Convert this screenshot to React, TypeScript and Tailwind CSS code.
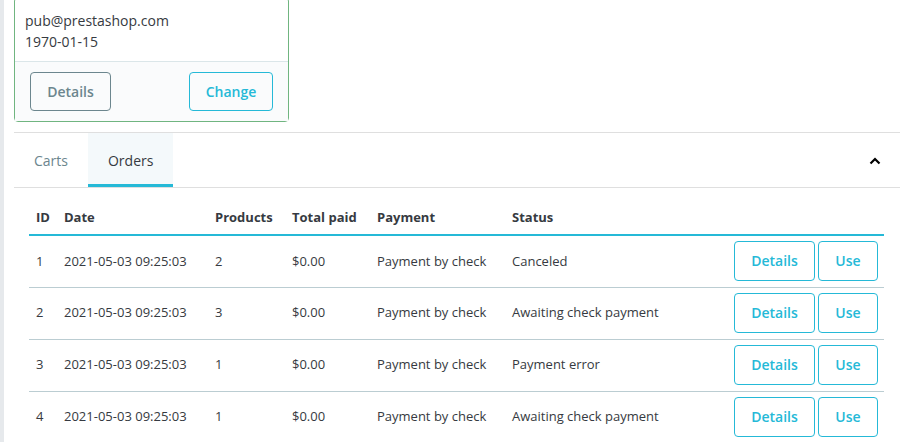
import { useState } from "react";

const orders = [
  { id: 1, date: "2021-05-03 09:25:03", products: 2, total: "$0.00", payment: "Payment by check", status: "Canceled" },
  { id: 2, date: "2021-05-03 09:25:03", products: 3, total: "$0.00", payment: "Payment by check", status: "Awaiting check payment" },
  { id: 3, date: "2021-05-03 09:25:03", products: 1, total: "$0.00", payment: "Payment by check", status: "Payment error" },
  { id: 4, date: "2021-05-03 09:25:03", products: 1, total: "$0.00", payment: "Payment by check", status: "Awaiting check payment" },
];

const outlineCyan =
  "h-[40px] rounded-[4px] border border-[#25b9d7] bg-white text-[14px] font-semibold text-[#25b9d7] leading-none";

export default function App() {
  const [tab, setTab] = useState("Orders");

  return (
    <div
      className="flex h-[442px] w-[907px] overflow-hidden bg-white text-[#363a41]"
      style={{ fontFamily: '"Open Sans", "Noto Sans", sans-serif' }}
    >
      <div className="w-[4px] shrink-0 bg-[#e6e9ec]" />
      <div className="flex-1 pl-[10px] pr-[7px]">
        {/* customer card */}
        <div className="-mt-[3px] w-[275px] rounded-[4px] border border-[#70b580]">
          <div className="px-[10px] pt-[12px] pb-[9px] text-[14px] leading-[21px]">
            <p>pub@prestashop.com</p>
            <p>1970-01-15</p>
          </div>
          <div className="flex items-center justify-between border-t border-[#dbe6e9] bg-[#fafbfc] px-[15px] pt-[10px] pb-[10px]">
            <button className="h-[39px] w-[81px] rounded-[4px] border border-[#6c868e] text-[14px] font-semibold text-[#6c868e]">
              Details
            </button>
            <button className="h-[39px] w-[84px] rounded-[4px] border border-[#25b9d7] text-[14px] font-semibold text-[#25b9d7]">
              Change
            </button>
          </div>
        </div>

        {/* tabs */}
        <div className="mt-[10px] border-t border-[#dfdfdf]">
          <div className="flex h-[55px] items-stretch border-b border-[#dfdfdf]">
            {["Carts", "Orders"].map((t) => (
              <button
                key={t}
                onClick={() => setTab(t)}
                className={
                  tab === t
                    ? "flex items-center border-b-[3px] border-[#25b9d7] bg-[#f4f9fb] px-[20px] pt-[3px] text-[14px] text-[#363a41]"
                    : "flex items-center border-b-[3px] border-transparent px-[20px] pt-[3px] text-[14px] text-[#6c868e]"
                }
              >
                {t}
              </button>
            ))}
            <div className="flex-1" />
            <div className="flex items-center pr-[19px] pt-[1px]">
              <svg width="12" height="8" viewBox="0 0 12 8">
                <polyline points="1.5,6.5 6,2 10.5,6.5" fill="none" stroke="#000" strokeWidth="2.2" />
              </svg>
            </div>
          </div>

          {/* orders table */}
          <div className="px-[15px] pt-[15px]">
            <table className="w-[855px] table-fixed border-collapse text-[13px]">
              <colgroup>
                <col className="w-[28px]" />
                <col className="w-[151px]" />
                <col className="w-[77px]" />
                <col className="w-[85px]" />
                <col className="w-[135px]" />
                <col className="w-[222px]" />
                <col />
              </colgroup>
              <thead>
                <tr className="h-[32px] border-b-2 border-[#25b9d7] text-left font-bold">
                  <th className="pl-[7px] pb-[1px] font-bold">ID</th>
                  <th className="pl-[7px] pb-[1px] font-bold">Date</th>
                  <th className="pl-[7px] pb-[1px] font-bold">Products</th>
                  <th className="pl-[7px] pb-[1px] font-bold">Total paid</th>
                  <th className="pl-[7px] pb-[1px] font-bold">Payment</th>
                  <th className="pl-[7px] pb-[1px] font-bold">Status</th>
                  <th />
                </tr>
              </thead>
              <tbody>
                {orders.map((o) => (
                  <tr key={o.id} className="h-[52px] border-b border-[#bbcdd2]">
                    <td className="pl-[7px]">{o.id}</td>
                    <td className="pl-[7px]">{o.date}</td>
                    <td className="pl-[7px]">{o.products}</td>
                    <td className="pl-[7px]">{o.total}</td>
                    <td className="pl-[7px]">{o.payment}</td>
                    <td className="pl-[7px]">{o.status}</td>
                    <td className="pr-[6px]">
                      <div className="flex justify-end gap-[3px]">
                        <button className={`${outlineCyan} w-[81px]`}>Details</button>
                        <button className={`${outlineCyan} w-[60px]`}>Use</button>
                      </div>
                    </td>
                  </tr>
                ))}
              </tbody>
            </table>
          </div>
        </div>
      </div>
    </div>
  );
}
